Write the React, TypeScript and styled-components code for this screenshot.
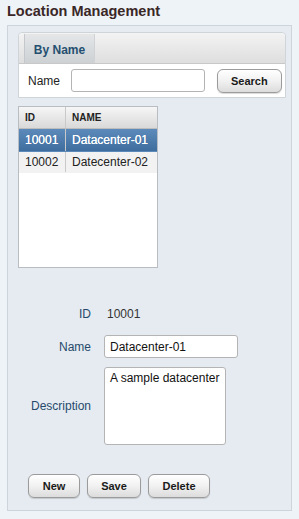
import React from 'react';
import styled, { createGlobalStyle } from 'styled-components';

const GlobalStyle = createGlobalStyle`
  html, body {
    margin: 0;
    padding: 0;
    background: #eef3f8;
    font-family: "Liberation Sans", Arial, sans-serif;
  }
`;

const Page = styled.div`
  width: 299px;
  height: 519px;
  padding: 3px 0 0 7px;
  box-sizing: border-box;
`;

const Title = styled.h2`
  margin: 0;
  height: 22px;
  font-size: 14.5px;
  font-weight: bold;
  line-height: 17px;
  color: #3a2727;
`;

const Panel = styled.div`
  width: 285px;
  height: 486px;
  box-sizing: border-box;
  background: #e5ebf1;
  border: 1px solid #cdd4db;
  padding: 6px 6px 0 10px;
  display: flex;
  flex-direction: column;
`;

const TabBox = styled.div`
  width: 268px;
  border: 1px solid #cfd4d9;
  border-radius: 4px 4px 0 0;
  background: #fff;
  box-sizing: border-box;
`;

const TabStrip = styled.div`
  height: 30px;
  display: flex;
  align-items: flex-end;
  padding-left: 5px;
  background: linear-gradient(#f3f3f3, #dedede);
  border-bottom: 1px solid #c8c8c8;
  border-radius: 4px 4px 0 0;
`;

const Tab = styled.div<{ $active?: boolean }>`
  height: 29px;
  width: 71px;
  box-sizing: border-box;
  display: flex;
  align-items: center;
  justify-content: center;
  padding-top: 3px;
  font-size: 12px;
  font-weight: bold;
  color: #244f70;
  border-left: 1px solid #c4c8cc;
  border-right: 1px solid #cfd3d6;
  background: ${(p) => (p.$active ? 'linear-gradient(#e4e6e8, #cdd1d4)' : 'transparent')};
`;

const SearchRow = styled.div`
  height: 33px;
  display: flex;
  align-items: center;
  padding: 0 3px 0 9px;
  font-size: 12px;
  color: #222;
`;

const SearchLabel = styled.span`
  width: 43px;
`;

const TextInput = styled.input<{ $w: number }>`
  width: ${(p) => p.$w}px;
  height: 23px;
  box-sizing: border-box;
  border: 1px solid #b4b4b4;
  border-radius: 3px;
  padding: 0 5px;
  font-family: "Liberation Sans", Arial, sans-serif;
  font-size: 12px;
  color: #111;
  background: #fff;
  outline: none;
`;

const Button = styled.button<{ $w: number }>`
  width: ${(p) => p.$w}px;
  height: 24px;
  box-sizing: border-box;
  border: 1px solid #9b9b9b;
  border-radius: 6px;
  background: linear-gradient(#ffffff, #f1f1f1 50%, #dcdcdc);
  box-shadow: 0 1px 1px rgba(0, 0, 0, 0.15);
  font-family: "Liberation Sans", Arial, sans-serif;
  font-size: 11px;
  font-weight: bold;
  color: #1a1a1a;
  padding: 0;
  cursor: pointer;
`;

const SearchButton = styled(Button)`
  margin-left: 12px;
`;

const Grid = styled.div`
  margin-top: 8px;
  width: 140px;
  height: 162px;
  box-sizing: border-box;
  border: 1px solid #b9bdc1;
  background: #fff;
`;

const GridRow = styled.div<{ $kind: 'head' | 'selected' | 'plain' }>`
  display: grid;
  grid-template-columns: 47px 1fr;
  height: ${(p) => (p.$kind === 'head' ? 21 : p.$kind === 'selected' ? 22 : 20)}px;
  align-items: stretch;
  font-size: ${(p) => (p.$kind === 'head' ? 10 : 12)}px;
  font-weight: ${(p) => (p.$kind === 'head' ? 'bold' : 'normal')};
  color: ${(p) => (p.$kind === 'selected' ? '#fff' : '#222')};
  text-shadow: ${(p) => (p.$kind === 'selected' ? '0 0 0.4px #fff' : 'none')};
  background: ${(p) =>
    p.$kind === 'head'
      ? 'linear-gradient(#f6f6f6, #d9d9d9)'
      : p.$kind === 'selected'
      ? 'linear-gradient(#5c8aba, #3f6d9e)'
      : '#f2f2f2'};
  border-bottom: 1px solid ${(p) => (p.$kind === 'head' ? '#bdbdbd' : 'transparent')};
`;

const Cell = styled.div<{ $first?: boolean }>`
  display: flex;
  align-items: center;
  padding-left: 6px;
  border-right: ${(p) => (p.$first ? '1px solid #c9c9c9' : 'none')};
  white-space: nowrap;
  overflow: hidden;
`;

const Form = styled.div`
  margin: 38px 0 0 -10px;
  display: grid;
  grid-template-columns: 83px auto;
  column-gap: 13px;
  align-items: center;
  justify-items: start;
`;

const FieldLabel = styled.label<{ $h: number; $gap: number }>`
  justify-self: end;
  height: ${(p) => p.$h}px;
  margin-bottom: ${(p) => p.$gap}px;
  display: flex;
  align-items: center;
  font-size: 12px;
  color: #274a6c;
`;

const FieldValue = styled.div<{ $gap: number }>`
  height: 16px;
  margin-bottom: ${(p) => p.$gap}px;
  display: flex;
  align-items: center;
  padding-left: 3px;
  font-size: 12px;
  color: #333;
`;

const Spaced = styled.div<{ $gap: number }>`
  margin-bottom: ${(p) => p.$gap}px;
  display: flex;
`;

const TextArea = styled.textarea`
  width: 122px;
  height: 78px;
  box-sizing: border-box;
  border: 1px solid #b4b4b4;
  border-radius: 3px;
  padding: 3px 5px;
  font-family: "Liberation Sans", Arial, sans-serif;
  font-size: 12px;
  color: #111;
  resize: none;
  outline: none;
`;

const Actions = styled.div`
  margin: 29px 0 0 10px;
  display: flex;
  gap: 7px;
`;

export default function App() {
  return (
    <>
      <GlobalStyle />
      <Page>
        <Title>Location Management</Title>
        <Panel>
          <TabBox>
            <TabStrip>
              <Tab $active>By Name</Tab>
            </TabStrip>
            <SearchRow>
              <SearchLabel>Name</SearchLabel>
              <TextInput $w={134} defaultValue="" />
              <SearchButton $w={66}>Search</SearchButton>
            </SearchRow>
          </TabBox>

          <Grid>
            <GridRow $kind="head">
              <Cell $first>ID</Cell>
              <Cell>NAME</Cell>
            </GridRow>
            <GridRow $kind="selected">
              <Cell $first>10001</Cell>
              <Cell>Datacenter-01</Cell>
            </GridRow>
            <GridRow $kind="plain">
              <Cell $first>10002</Cell>
              <Cell>Datecenter-02</Cell>
            </GridRow>
          </Grid>

          <Form>
            <FieldLabel $h={16} $gap={13}>ID</FieldLabel>
            <FieldValue $gap={13}>10001</FieldValue>
            <FieldLabel $h={23} $gap={9}>Name</FieldLabel>
            <Spaced $gap={9}>
              <TextInput $w={134} defaultValue="Datacenter-01" />
            </Spaced>
            <FieldLabel $h={78} $gap={0}>Description</FieldLabel>
            <Spaced $gap={0}>
              <TextArea defaultValue="A sample datacenter" />
            </Spaced>
          </Form>

          <Actions>
            <Button $w={52}>New</Button>
            <Button $w={54}>Save</Button>
            <Button $w={62}>Delete</Button>
          </Actions>
        </Panel>
      </Page>
    </>
  );
}
